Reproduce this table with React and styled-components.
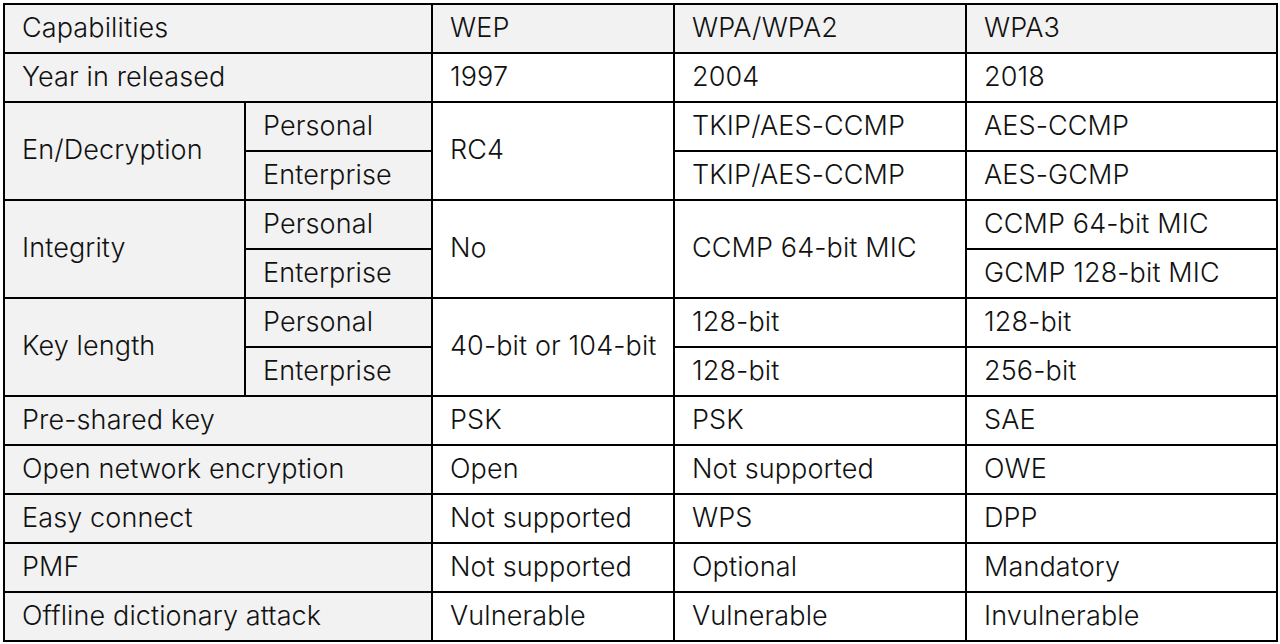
import React from "react";
import styled, { createGlobalStyle } from "styled-components";

const Global = createGlobalStyle`
  html, body { margin: 0; padding: 0; background: #ffffff; }
  body { font-family: Inter, "Liberation Sans", Arial, sans-serif; }
`;

const Page = styled.div`
  padding: 3px 0 0 3px;
`;

const Grid = styled.div`
  display: grid;
  grid-template-columns: 239px 185px 240px 290px 309px;
  grid-auto-rows: 47px;
  gap: 2px;
  padding: 2px;
  background: #000;
  width: max-content;
`;

const Cell = styled.div`
  grid-column: ${(p) => p.$col} / span ${(p) => p.$cspan || 1};
  grid-row: ${(p) => p.$row} / span ${(p) => p.$rspan || 1};
  background: ${(p) => (p.$label ? "#f2f2f2" : "#ffffff")};
  display: flex;
  align-items: center;
  padding: 0 0 3px 17px;
  font-family: Inter, "Liberation Sans", Arial, sans-serif;
  font-weight: 300;
  font-size: 27px;
  letter-spacing: 0.12px;
  color: #111111;
  white-space: nowrap;
`;

// [col, row, cspan, rspan, text, label]
const cells = [
  [1, 1, 2, 1, "Capabilities", true],
  [3, 1, 1, 1, "WEP", true],
  [4, 1, 1, 1, "WPA/WPA2", true],
  [5, 1, 1, 1, "WPA3", true],

  [1, 2, 2, 1, "Year in released", true],
  [3, 2, 1, 1, "1997"],
  [4, 2, 1, 1, "2004"],
  [5, 2, 1, 1, "2018"],

  [1, 3, 1, 2, "En/Decryption", true],
  [2, 3, 1, 1, "Personal", true],
  [2, 4, 1, 1, "Enterprise", true],
  [3, 3, 1, 2, "RC4"],
  [4, 3, 1, 1, "TKIP/AES-CCMP"],
  [5, 3, 1, 1, "AES-CCMP"],
  [4, 4, 1, 1, "TKIP/AES-CCMP"],
  [5, 4, 1, 1, "AES-GCMP"],

  [1, 5, 1, 2, "Integrity", true],
  [2, 5, 1, 1, "Personal", true],
  [2, 6, 1, 1, "Enterprise", true],
  [3, 5, 1, 2, "No"],
  [4, 5, 1, 2, "CCMP 64-bit MIC"],
  [5, 5, 1, 1, "CCMP 64-bit MIC"],
  [5, 6, 1, 1, "GCMP 128-bit MIC"],

  [1, 7, 1, 2, "Key length", true],
  [2, 7, 1, 1, "Personal", true],
  [2, 8, 1, 1, "Enterprise", true],
  [3, 7, 1, 2, "40-bit or 104-bit"],
  [4, 7, 1, 1, "128-bit"],
  [5, 7, 1, 1, "128-bit"],
  [4, 8, 1, 1, "128-bit"],
  [5, 8, 1, 1, "256-bit"],

  [1, 9, 2, 1, "Pre-shared key", true],
  [3, 9, 1, 1, "PSK"],
  [4, 9, 1, 1, "PSK"],
  [5, 9, 1, 1, "SAE"],

  [1, 10, 2, 1, "Open network encryption", true],
  [3, 10, 1, 1, "Open"],
  [4, 10, 1, 1, "Not supported"],
  [5, 10, 1, 1, "OWE"],

  [1, 11, 2, 1, "Easy connect", true],
  [3, 11, 1, 1, "Not supported"],
  [4, 11, 1, 1, "WPS"],
  [5, 11, 1, 1, "DPP"],

  [1, 12, 2, 1, "PMF", true],
  [3, 12, 1, 1, "Not supported"],
  [4, 12, 1, 1, "Optional"],
  [5, 12, 1, 1, "Mandatory"],

  [1, 13, 2, 1, "Offline dictionary attack", true],
  [3, 13, 1, 1, "Vulnerable"],
  [4, 13, 1, 1, "Vulnerable"],
  [5, 13, 1, 1, "Invulnerable"],
];

export default function App() {
  return (
    <>
      <Global />
      <Page>
        <Grid>
          {cells.map(([col, row, cspan, rspan, text, label], i) => (
            <Cell key={i} $col={col} $row={row} $cspan={cspan} $rspan={rspan} $label={label}>
              {text}
            </Cell>
          ))}
        </Grid>
      </Page>
    </>
  );
}
